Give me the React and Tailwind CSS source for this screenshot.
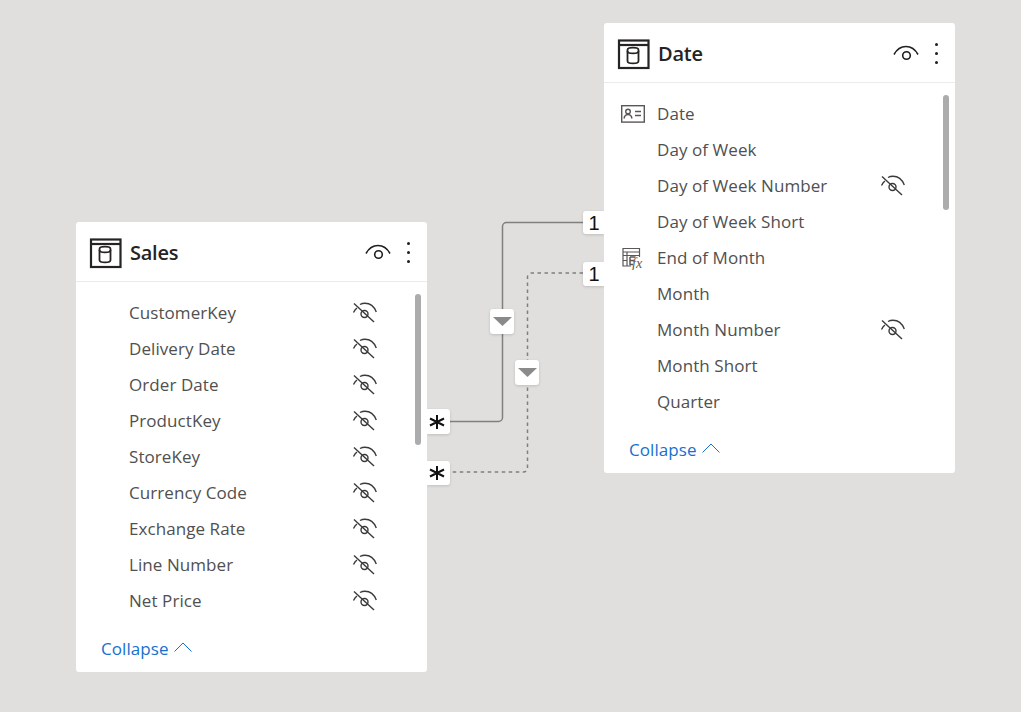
const FONT = "font-['Open_Sans','Noto_Sans',sans-serif]";

function TableIcon() {
  return (
    <svg width="33" height="33" viewBox="0 0 33 33" fill="none" stroke="#252423" strokeWidth="2.200" className="shrink-0">
      <rect x="2" y="3.500" width="29.500" height="27.500" />
      <path d="M2 8H31.500" />
      <path d="M10.500 13c0-1.500 2.700-2.300 5.500-2.300s5.500.8 5.500 2.300v11c0 1.500-2.700 2.400-5.500 2.400s-5.500-.9-5.500-2.400z" strokeWidth="1.800" />
      <path d="M10.500 14c0 1.500 2.700 2.400 5.500 2.400s5.500-.9 5.500-2.400" strokeWidth="1.800" />
    </svg>
  );
}

function EyeOpen() {
  return (
    <svg width="26" height="16" viewBox="0 0 26 16" fill="none" stroke="#201f1e" strokeWidth="1.600" className="shrink-0 mb-[2px]">
      <path d="M1 9.500C4 4 8 1.500 13 1.500s9 2.500 12 8" />
      <circle cx="13.500" cy="10.500" r="3.800" />
    </svg>
  );
}

function EyeOff() {
  return (
    <svg width="26" height="22" viewBox="0 0 26 22" fill="none" stroke="#3b3a39" strokeWidth="1.400" className="shrink-0">
      <path d="M1.500 10.500C2.500 8.500 3.500 7 5 6" />
      <path d="M8 2.500C9.500 1.700 11 1.300 13 1.300c5 0 9 3 11.300 8.700" />
      <circle cx="12.500" cy="12" r="3.500" />
      <path d="M2 1.500L22 20" />
    </svg>
  );
}

function IdCardIcon() {
  return (
    <svg width="24" height="18" viewBox="0 0 24 18" fill="none" stroke="#5a5856" strokeWidth="1.400">
      <rect x="0.700" y="0.700" width="22.600" height="16.400" />
      <circle cx="7" cy="6.500" r="2.300" />
      <path d="M3 13.500c.5-2.700 2-4 4-4s3.500 1.300 4 4" />
      <path d="M14 6.500h6M14 10.500h6" />
    </svg>
  );
}

function CalcIcon() {
  return (
    <svg width="24" height="24" viewBox="0 0 24 24" fill="none" stroke="#5a5856" strokeWidth="1.200">
      <path d="M10 20H2V2.500h16.500V11" />
      <path d="M2 6h16.500M2 9.500h16.500M6 6v14M2 14.500h4" />
      <path d="M9 11h5.500M9 11v7.500h3M9 14.500h4" strokeWidth="1.500" />
      <text x="11" y="22" fontFamily="'Liberation Serif',serif" fontStyle="italic" fontSize="14" fill="#5a5856" stroke="none">fx</text>
    </svg>
  );
}

function Kebab() {
  return (
    <div className="flex flex-col gap-[6px] w-[3px] ml-[16px]">
      <span className="block w-[3px] h-[3px] rounded-full bg-[#201f1e]" />
      <span className="block w-[3px] h-[3px] rounded-full bg-[#201f1e]" />
      <span className="block w-[3px] h-[3px] rounded-full bg-[#201f1e]" />
    </div>
  );
}

function Row({ icon, label, hidden }) {
  return (
    <div className="flex items-center h-[36px]">
      <div className="w-[24px] ml-[17px] mr-[12px] h-full flex items-center justify-center shrink-0">{icon}</div>
      <span className="text-[17px] tracking-[0.07px] text-[#505050] w-[223px] whitespace-nowrap">{label}</span>
      {hidden && <span className="flex -mt-[1px]"><EyeOff /></span>}
    </div>
  );
}

function Card({ title, rows, position, thumbHeight }) {
  return (
    <div className={`absolute w-[351px] h-[450px] bg-white rounded-[3px] flex flex-col ${position}`}>
      <div className="h-[60px] border-b border-[#ebebeb] flex items-center pt-[2px] pl-[13px] pr-[17px] shrink-0">
        <TableIcon />
        <span className="ml-[8px] text-[20px] font-semibold tracking-[-0.25px] text-[#252423] flex-1">{title}</span>
        <EyeOpen />
        <Kebab />
      </div>
      <div className="relative flex-1 pt-[13px]">
        {rows.map((r) => (
          <Row key={r.label} {...r} />
        ))}
        <div className="absolute right-[6px] top-[12px] w-[6px] rounded-[3px] bg-[#acacac]" style={{ height: thumbHeight }} />
        <div className="flex items-center mt-[17px] pl-[25px] text-[#1670d0]">
          <span className="text-[17px] tracking-[0.07px]">Collapse</span>
          <svg width="20" height="12" viewBox="0 0 20 12" fill="none" stroke="#1670d0" strokeWidth="1" className="ml-[4px] mb-[3px]">
            <path d="M1.500 10.500L10 2l8.500 8.500" />
          </svg>
        </div>
      </div>
    </div>
  );
}

function Badge({ children, position }) {
  return (
    <div className={`absolute bg-white shadow-[0_1px_3px_rgba(0,0,0,0.15)] flex items-center justify-center text-[#111] font-['Liberation_Sans',sans-serif] ${position}`}>
      {children}
    </div>
  );
}

function Drop({ position }) {
  return (
    <Badge position={`rounded-[3px] ${position}`}>
      <svg width="19" height="9" viewBox="0 0 19 9"><path d="M0 0h19L9.500 9z" fill="#8a8a8a" /></svg>
    </Badge>
  );
}

function Star() {
  return (
    <svg width="16" height="14" viewBox="0 0 16 14" stroke="#111" strokeWidth="2" fill="none">
      <path d="M8 0v14M1 3.500l14 7M15 3.500l-14 7" />
    </svg>
  );
}

const dateRows = [
  { label: "Date", icon: <IdCardIcon /> },
  { label: "Day of Week" },
  { label: "Day of Week Number", hidden: true },
  { label: "Day of Week Short" },
  { label: "End of Month", icon: <CalcIcon /> },
  { label: "Month" },
  { label: "Month Number", hidden: true },
  { label: "Month Short" },
  { label: "Quarter" },
];

const salesRows = ["CustomerKey", "Delivery Date", "Order Date", "ProductKey", "StoreKey", "Currency Code", "Exchange Rate", "Line Number", "Net Price"].map((label) => ({ label, hidden: true }));

export default function App() {
  return (
    <div className={`relative w-[1021px] h-[712px] overflow-hidden bg-[#e1dfdd] ${FONT}`}>
      <svg className="absolute left-0 top-0" width="1021" height="712" fill="none" stroke="#7f7f7f" strokeWidth="1.500">
        <path d="M590 222.500H506.500a4 4 0 0 0-4 4V417.500a4 4 0 0 1-4 4H440" />
        <path d="M590 273H531.500a4 4 0 0 0-4 4V468a4 4 0 0 1-4 4H440" strokeDasharray="3.500 3.500" />
      </svg>
      <Badge position="rounded-l-[3px] left-[583px] top-[211px] w-[21px] h-[23px] text-[20px] pl-[1px]">1</Badge>
      <Badge position="rounded-l-[3px] left-[583px] top-[262px] w-[21px] h-[24px] text-[20px] pl-[1px]">1</Badge>
      <Badge position="rounded-r-[3px] left-[427px] top-[409px] w-[23px] h-[25px] pr-[3px]"><Star /></Badge>
      <Badge position="rounded-r-[3px] left-[427px] top-[461px] w-[23px] h-[24px] pr-[3px]"><Star /></Badge>
      <Card title="Sales" rows={salesRows} position="left-[76px] top-[222px]" thumbHeight={151} />
      <Card title="Date" rows={dateRows} position="left-[604px] top-[23px]" thumbHeight={115} />
      <Drop position="left-[490px] top-[309px] w-[24px] h-[25px]" />
      <Drop position="left-[515px] top-[360px] w-[24px] h-[25px]" />
    </div>
  );
}
